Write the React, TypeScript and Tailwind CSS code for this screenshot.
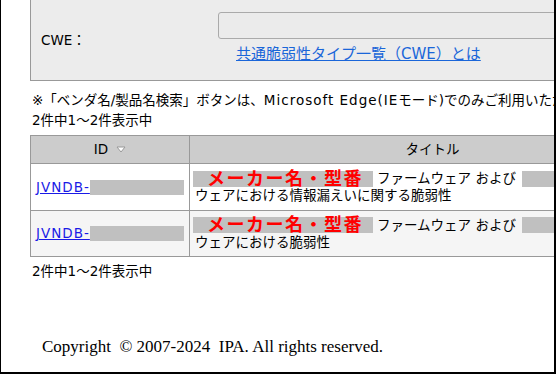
import React from "react";

const sans = "font-['DejaVu_Sans','Noto_Sans_CJK_JP',sans-serif]";

function TitleCell({ second }: { second: string }) {
  return (
    <div className="pl-[3px] text-[13.5px] leading-[17px] text-black">
      <div className="flex items-center whitespace-nowrap">
        <span className="inline-flex h-[16px] w-[180px] shrink-0 items-center bg-[#c0c0c0] pl-[14px] text-[18px] font-bold leading-[16px] tracking-[1.5px] text-[#ff0000]">
          メーカー名・型番
        </span>
        <span className="ml-[4px] shrink-0">ファームウェア および</span>
        <span className="ml-[6px] inline-block h-[16px] w-[170px] shrink-0 bg-[#c0c0c0]" />
      </div>
      <div className="whitespace-nowrap pl-[2px]">{second}</div>
    </div>
  );
}

function IdCell() {
  return (
    <div className="flex items-center pl-[5px] text-[13.5px] whitespace-nowrap">
      <a className="shrink-0 text-[#1a1ae6] underline tracking-[1px]" href="#">JVNDB-</a>
      <span className="inline-block h-[15px] w-[94px] shrink-0 bg-[#c0c0c0]" />
    </div>
  );
}

export default function App() {
  return (
    <div className={`w-[556px] h-[374px] overflow-hidden bg-white border-l border-r-2 border-b-2 border-black text-black ${sans}`}>
      {/* search panel */}
      <div className="ml-[29px] flex h-[81px] w-[700px] bg-[#ececec] border-l border-b border-[#999]">
        <div className="flex w-[187px] shrink-0 items-center pl-[10px] text-[13.5px]">CWE：</div>
        <div className="pt-[12px]">
          <div className="h-[27px] w-[480px] rounded-[3px] border border-[#aaa] bg-[#ebebeb]" />
          <div className="mt-[5px] pl-[18px] text-[15px] leading-[20px] whitespace-nowrap">
            <a href="#" className="text-[#1a66d9] underline">共通脆弱性タイプ一覧（CWE）とは</a>
          </div>
        </div>
      </div>

      <div className="ml-[31px] mt-[9px] text-[13.5px] leading-[20px] whitespace-nowrap">
        ※「ベンダ名/製品名検索」ボタンは、<span className="tracking-[1px]">Microsoft Edge(IE</span>モード)でのみご利用いただけます。
      </div>
      <div className="ml-[31px] text-[13.5px] leading-[21px] whitespace-nowrap">2件中1～2件表示中</div>

      <table className="mt-[4px] ml-[29px] w-[645px] table-fixed border-collapse text-[13.5px]">
        <colgroup>
          <col className="w-[159px]" />
          <col className="w-[486px]" />
        </colgroup>
        <thead>
          <tr className="h-[28px] bg-[#cccccc]">
            <th className="border border-[#999] p-0 font-normal">
              <span className="inline-flex items-center">
                ID
                <svg className="ml-[8px]" width="10" height="7" viewBox="0 0 10 7">
                  <polygon points="1,1 9,1 5,6" fill="#fff" stroke="#999" strokeWidth="1" />
                </svg>
              </span>
            </th>
            <th className="border border-[#999] p-0 font-normal">タイトル</th>
          </tr>
        </thead>
        <tbody>
          <tr className="h-[47px] bg-white">
            <td className="border border-[#999] p-0 align-middle"><IdCell /></td>
            <td className="border border-[#999] p-0 align-middle"><TitleCell second="ウェアにおける情報漏えいに関する脆弱性" /></td>
          </tr>
          <tr className="h-[46px] bg-[#f5f5f5]">
            <td className="border border-[#999] p-0 align-middle"><IdCell /></td>
            <td className="border border-[#999] p-0 align-middle"><TitleCell second="ウェアにおける脆弱性" /></td>
          </tr>
        </tbody>
      </table>

      <div className="ml-[31px] mt-[4px] text-[13.5px] leading-[20px] whitespace-nowrap">2件中1～2件表示中</div>

      <div className="ml-[41px] mt-[56px] font-['Liberation_Serif',serif] text-[17px] leading-[20px] whitespace-nowrap text-black">
        Copyright&nbsp; © 2007-2024&nbsp; IPA. All rights reserved.
      </div>
    </div>
  );
}
